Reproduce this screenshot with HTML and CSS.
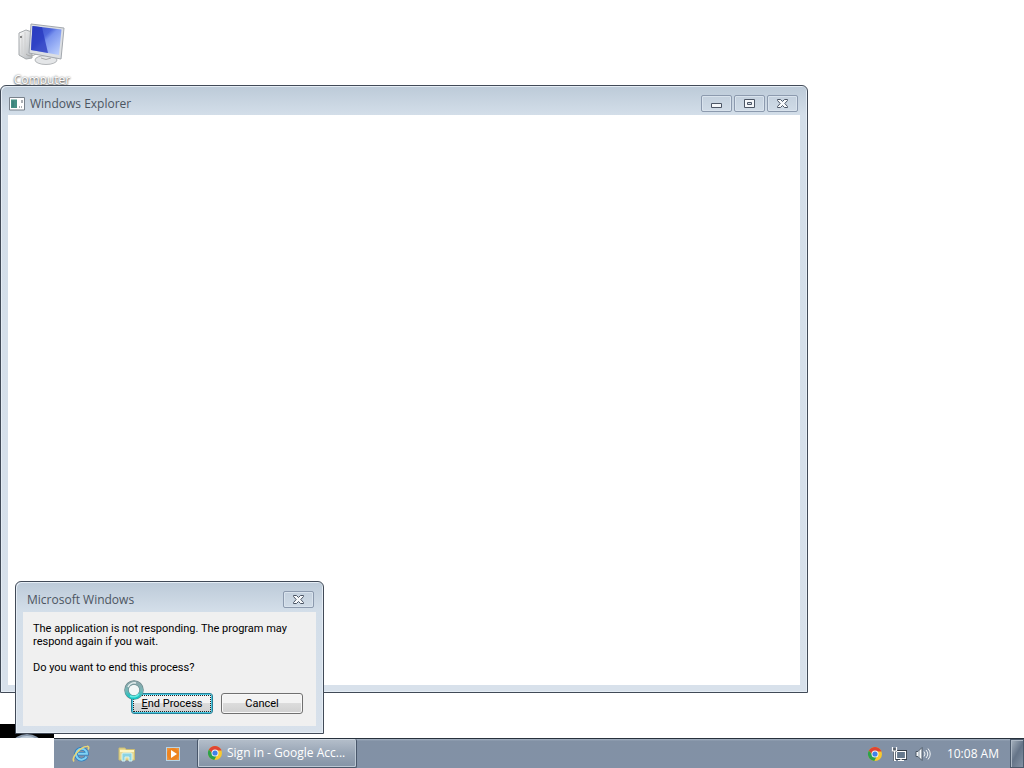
FILE: index.html
```html
<!DOCTYPE html>
<html lang="en">
<head>
<meta charset="utf-8">
<title>Desktop</title>
<link rel="stylesheet" href="styles.css">
</head>
<body>
<svg class="defs" aria-hidden="true">
  <defs>
    <linearGradient id="screen" x2="1" y2="1"><stop offset="0" stop-color="#2f43c4"/><stop offset=".4" stop-color="#5069dd"/><stop offset=".5" stop-color="#7993ee"/><stop offset="1" stop-color="#c3d6ff"/></linearGradient>
    <linearGradient id="metal" x2="1" y2="1"><stop offset="0" stop-color="#fafafa"/><stop offset="1" stop-color="#b5b9bd"/></linearGradient>
    <linearGradient id="ring" x2="0" y2="1"><stop offset="0" stop-color="#8aa5a9"/><stop offset=".5" stop-color="#78b5b6"/><stop offset="1" stop-color="#16c5c3"/></linearGradient>
    <symbol id="chrome" viewBox="0 0 16 16">
      <circle cx="8" cy="8" r="7" fill="#f9c92e"/>
      <path d="M1.9 4.5A7 7 0 0 1 14.1 4.5L14.5 5.5H8L5.8 9.3z" fill="#df4433"/>
      <path d="M1.9 4.5A7 7 0 0 0 7.3 15L10.2 9.4 5.8 9.3z" fill="#2ba14b"/>
      <circle cx="8" cy="8" r="3.5" fill="#f6f6f6"/><circle cx="8" cy="8" r="2.6" fill="#4080e8"/>
    </symbol>
    <symbol id="close" viewBox="0 0 13 11">
      <path d="M1.500 1.500H4.500L6.500 3.500 8.500 1.500H11.500V2.500L8.800 5.500 11.500 8.500V9.500H8.500L6.500 7.500 4.500 9.500H1.500V8.500L4.200 5.500 1.500 2.500z" fill="#f8fafc" stroke="#4b5564"/>
    </symbol>
  </defs>
</svg>
<main class="desktop">
  <a class="shortcut" href="#computer">
    <svg class="shortcut-icon" viewBox="0 0 50 44" aria-hidden="true">
      <path d="M2 10L9 7 15 9V35L9 36 2 32z" fill="url(#metal)" stroke="#a5a9ac"/>
      <path d="M5 12V31M8 9V33" stroke="#d0d0d0"/><circle cx="4" cy="14" r="1" fill="#666"/>
      <path d="M9 31Q13 35 19 31" fill="none" stroke="#aaa"/>
      <path d="M25 30L33 32 32 38 25 38z" fill="#c4c7ca"/>
      <ellipse cx="29" cy="37" rx="11" ry="4.500" fill="#e4e6e8" stroke="#b3b6b9"/>
      <path d="M24 35Q29 38 34 35" fill="none" stroke="#aaa"/>
      <path d="M14 1L47 5 44 36 12 30z" fill="#dcdfe3" stroke="#a3a8ae"/>
      <path d="M15.500 3L44.500 6.500 42 32 14 27z" fill="url(#screen)"/>
      <path d="M15.500 3L25 4.200 31 30 14 27z" fill="#2637bd" opacity=".75"/>
    </svg>
    <span>Computer</span>
  </a>

  <section class="window explorer" aria-labelledby="explorer-title">
    <header class="titlebar">
      <svg class="app-icon" viewBox="0 0 16 14" aria-hidden="true"><path d="M.5 .5H15.500V13H.500z" fill="#fff" stroke="#78818b"/><path d="M2 2.500H8V11H2z" fill="#458f83"/><path d="M4 4V10" stroke="#377"/><path d="M13 3V6M10 10H11M12 10H13" stroke="#59616a"/></svg>
      <h1 id="explorer-title">Windows Explorer</h1>
      <div class="controls">
        <button type="button" aria-label="Minimize"><svg viewBox="0 0 13 11"><path d="M1.500 5.500H11.500V9.500H1.500z" fill="#f4f7fa" stroke="#4b5564"/></svg></button>
        <button type="button" aria-label="Maximize"><svg viewBox="0 0 13 11"><path d="M1.500 1.500H11.500V9.500H1.500z" fill="#f4f7fa" stroke="#4b5564"/><path d="M4.500 4.500H8.500V6.500H4.500z" fill="#d2dbe5" stroke="#4b5564"/></svg></button>
        <button type="button" aria-label="Close"><svg><use href="#close"/></svg></button>
      </div>
    </header>
    <div class="client"></div>
  </section>

  <div class="start-strip"><svg class="orb" viewBox="0 0 26 4" aria-hidden="true"><ellipse cx="13" cy="9" rx="14" ry="9" fill="#8797aa"/><ellipse cx="13" cy="10" rx="12" ry="8" fill="#bdcbd8"/></svg></div>

  <section class="window dialog" role="dialog" aria-labelledby="dialog-title">
    <header class="titlebar">
      <h2 id="dialog-title">Microsoft Windows</h2>
      <div class="controls"><button type="button" aria-label="Close"><svg><use href="#close"/></svg></button></div>
    </header>
    <div class="client">
      <p>The application is not responding. The program may respond again if you wait.</p>
      <p>Do you want to end this process?</p>
      <div class="actions">
        <button class="push primary" type="button"><u>E</u>nd Process</button>
        <button class="push" type="button">Cancel</button>
      </div>
    </div>
    <svg class="busy" viewBox="0 0 20 20" aria-hidden="true"><circle cx="10" cy="10" r="7.500" fill="#f2f7f7" stroke="#668185" stroke-width="4.500"/><circle cx="10" cy="10" r="7.500" fill="none" stroke="url(#ring)" stroke-width="3.500"/><path d="M4 7A7 7 0 0 1 12 3" fill="none" stroke="#e4eeee" stroke-width="1.500"/><path d="M6 16A7 7 0 0 0 15 14" fill="none" stroke="#66eee5" stroke-width="1.500"/></svg>
  </section>
</main>

<footer class="taskbar">
  <nav class="pinned" aria-label="Pinned programs">
    <button type="button" aria-label="Internet Explorer"><svg viewBox="0 0 18 18"><path d="M14.500 11.500A5.500 5.500 0 1 1 15 8.800H6" fill="none" stroke="#2f7fc0" stroke-width="3.600"/><path d="M14.500 11.500A5.500 5.500 0 1 1 15 8.800H6" fill="none" stroke="#80d2f3" stroke-width="2"/><path d="M2 16.500C-1 13 8 2 15 1.300 17 1 17 3 16 4.500" fill="none" stroke="#e9d576" stroke-width="1.600"/></svg></button>
    <button type="button" aria-label="File Explorer"><svg viewBox="0 0 18 18"><path d="M1 3H7L8 4.500H16.500V15H1z" fill="#e7d991" stroke="#cbbc72"/><path d="M2 6H16" stroke="#fff5c1" stroke-width="2"/><path d="M4 16V9Q4 8 5 8H13Q14 8 14 9V16H11V12H7V16z" fill="#8bd3e2" stroke="#d8f4f2"/></svg></button>
    <button type="button" aria-label="Media Player"><svg viewBox="0 0 18 18"><path d="M2 2H16V16H2z" fill="#b9d4e5"/><path d="M3 3H15V15H3z" fill="#ed923b"/><circle cx="9" cy="9" r="6" fill="#ee8420"/><path d="M7 5L13 9 7 13z" fill="#fff"/></svg></button>
  </nav>
  <button class="task" type="button"><svg aria-hidden="true"><use href="#chrome"/></svg><span>Sign in - Google Acc...</span></button>
  <div class="tray">
    <button type="button" aria-label="Chrome"><svg><use href="#chrome"/></svg></button>
    <button type="button" aria-label="Network"><svg viewBox="0 0 16 16"><path d="M5 5.500H15V12.500H5z" fill="#6e7c8b" stroke="#343d47" stroke-width="3"/><path d="M5.500 5.500H14.500V12.500H5.500zM10 13V15M7 14.500H13" fill="#65788c" stroke="#fff" stroke-width="1.200"/><path d="M1 2H6V6H5V15H2V6H1z" fill="#56606b"/><path d="M1.500 1V5H5.500V1M3.500 5V14.500H5" fill="none" stroke="#fff" stroke-width="1.200"/></svg></button>
    <button type="button" aria-label="Volume"><svg viewBox="0 0 16 16"><path d="M1 5.500H3L7 1.500V14.500L3 10.500H1z" fill="#f7f9fb" stroke="#4c5966"/><path d="M4 5V11" stroke="#8998a7"/><path d="M9 5.500Q11 8 9 10.500M11 4Q14.500 8 11 12M13 2.500Q17.500 8 13 13.500" fill="none" stroke="#f2f5f7"/></svg></button>
    <time datetime="10:08">10:08 AM</time>
    <button class="show-desktop" type="button" aria-label="Show desktop"></button>
  </div>
</footer>
</body>
</html>
```
FILE: styles.css
```css
* { box-sizing: border-box; }
body {
  margin: 0;
  min-height: 100vh;
  display: flex;
  flex-direction: column;
  overflow: hidden;
  background: #fff;
  font: 12px/16px "Open Sans", "Noto Sans", sans-serif;
}
button { padding: 0; border: 0; background: none; font: inherit; }
h1, h2, p { margin: 0; font: inherit; }
svg { display: block; }
.defs { position: absolute; width: 0; height: 0; }
.desktop { position: relative; flex: 1; }

.shortcut {
  position: absolute;
  left: 5px;
  top: 23px;
  width: 74px;
  display: flex;
  flex-direction: column;
  align-items: center;
  gap: 5px;
  color: #fff;
  text-decoration: none;
  text-shadow: 0 1px 2px #444, 0 0 2px #888;
}
.shortcut-icon { width: 50px; height: 44px; }

.window {
  position: absolute;
  display: flex;
  flex-direction: column;
  border: 1px solid #414a57;
  border-radius: 6px 6px 0 0;
  background: linear-gradient(#bccad8, #d3dee9 29px, #d8e1eb);
  box-shadow: inset 1px 1px #e5edf5, inset -1px -1px #e5edf5;
  padding: 0 7px 7px;
}
.titlebar { display: flex; align-items: center; color: #4c5561; }
.controls { display: flex; gap: 2px; margin-left: auto; }
.controls button {
  width: 31px;
  height: 17px;
  display: grid;
  place-items: center;
  border: 1px solid #8c9aae;
  border-radius: 2px;
  box-shadow: inset 0 0 0 1px #d9e3ed;
}
.controls svg { width: 13px; height: 11px; }
.client { flex: 1; }

.explorer { left: 0; top: 85px; width: 808px; height: 608px; }
.explorer .titlebar { height: 29px; padding: 6px 2px 0 1px; gap: 5px; }
.explorer .client { background: #fff; }
.app-icon { width: 16px; height: 14px; }

.start-strip {
  position: absolute;
  left: 0;
  bottom: 0;
  width: 54px;
  height: 14px;
  background: #000;
}
.orb { position: absolute; left: 14px; bottom: 0; width: 26px; height: 4px; }

.dialog { left: 15px; top: 581px; width: 309px; }
.dialog .titlebar { height: 30px; padding: 5px 2px 0 4px; }
.dialog .client {
  padding: 10px 10px 12px;
  background: #f0f0f0;
  color: #000;
  font: 11px/13px Roboto, "Open Sans", sans-serif;
}
.dialog p + p { margin-top: 13px; }
.actions { display: flex; justify-content: flex-end; gap: 8px; margin: 19px 3px 0 0; }
.push {
  width: 82px;
  height: 21px;
  border: 1px solid #707070;
  border-radius: 3px;
  background: linear-gradient(#f3f3f3 50%, #dcdcdc 50%, #d0d0d0);
  box-shadow: inset 0 0 0 1px #f8f8f8;
  color: #000;
}
.primary {
  border-color: #287f94;
  box-shadow: inset 0 0 0 1px #4ac9e3;
  outline: 1px dotted #222;
  outline-offset: -3px;
}
.busy { position: absolute; left: 108px; top: 98px; width: 20px; height: 20px; }

.taskbar {
  height: 30px;
  margin-left: 54px;
  display: flex;
  border-top: 1px solid #27313c;
  background: linear-gradient(#a6b3c2, #8291a5 2px, #8291a6);
  color: #fff;
}
.pinned { display: flex; width: 143px; padding-left: 4px; }
.pinned button { width: 46px; display: grid; place-items: center; }
.pinned svg { width: 18px; height: 18px; }
.task {
  width: 160px;
  display: flex;
  align-items: center;
  gap: 4px;
  padding-left: 9px;
  border: 1px solid #48566a;
  border-top: 0;
  border-radius: 2px;
  background: linear-gradient(#b5bfcb, #98a5b5 50%, #8493a6);
  box-shadow: inset 1px 1px #ccd5df, inset -1px -1px #bbc7d3;
  color: #fff;
  text-align: left;
  white-space: nowrap;
}
.task svg, .tray svg { width: 16px; height: 16px; }
.tray { display: flex; align-items: center; gap: 8px; margin-left: auto; }
.tray time { margin: 0 3px 0 8px; white-space: nowrap; }
.show-desktop {
  width: 14px;
  align-self: stretch;
  border: 1px solid #4b596b;
  background: linear-gradient(120deg, #a9b4c0, #657488 50%, #8492a4);
  box-shadow: inset 1px 1px #adb8c5;
}
```
